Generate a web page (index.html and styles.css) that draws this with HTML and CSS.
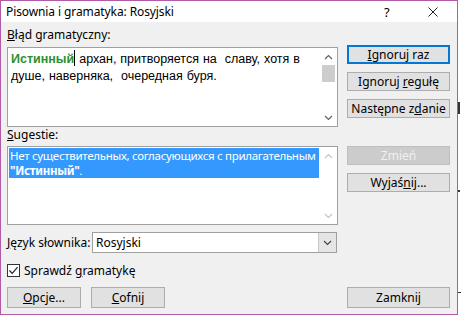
FILE: index.html
```html
<!DOCTYPE html>
<html lang="pl">
<head>
  <meta charset="UTF-8">
  <title>Pisownia i gramatyka: Rosyjski</title>
  <link rel="stylesheet" href="styles.css">
</head>
<body>
<div class="page">
  <div class="dialog">
    <div class="titlebar">
      <span class="title">Pisownia i gramatyka: Rosyjski</span>
      <span class="help">?</span>
      <svg class="close" width="10" height="10" viewBox="0 0 10 10"><path d="M0.5 0.5L9.5 9.5M9.5 0.5L0.5 9.5" stroke="#222" stroke-width="1"/></svg>
    </div>

    <div class="body">
      <div class="top">
        <div class="left">
          <div class="label"><u>B</u>łąd gramatyczny:</div>
          <div class="box error-box">
            <div class="error-text"><span class="wrong">Истинный</span><span class="caret"></span> архан, притворяется на&nbsp; славу, хотя в душе, наверняка,&nbsp; очередная буря.</div>
            <div class="scroll">
              <svg width="9" height="6" viewBox="0 0 9 6"><path d="M1 5L4.5 1.5L8 5" fill="none" stroke="#606060" stroke-width="1.2"/></svg>
              <div class="thumb"></div>
              <div class="spacer"></div>
              <svg width="9" height="6" viewBox="0 0 9 6"><path d="M1 1L4.5 4.5L8 1" fill="none" stroke="#606060" stroke-width="1.2"/></svg>
            </div>
          </div>
          <div class="label sug-label"><u>S</u>ugestie:</div>
          <div class="box sug-box">
            <div class="sug-list">
              <div class="sug-item">Нет существительных, согласующихся с прилагательным<br><b>"Истинный"</b>.</div>
            </div>
            <div class="scroll off">
              <svg width="9" height="6" viewBox="0 0 9 6"><path d="M1 5L4.5 1.5L8 5" fill="none" stroke="#c4c4c4" stroke-width="1.2"/></svg>
              <div class="spacer"></div>
              <svg width="9" height="6" viewBox="0 0 9 6"><path d="M1 1L4.5 4.5L8 1" fill="none" stroke="#c4c4c4" stroke-width="1.2"/></svg>
            </div>
          </div>
        </div>

        <div class="right">
          <button class="btn default"><u>I</u>gnoruj raz</button>
          <button class="btn">Ignoruj <u>r</u>egułę</button>
          <button class="btn">Następne z<u>d</u>anie</button>
          <button class="btn disabled gap">Zmień</button>
          <button class="btn">Wyjaś<u>n</u>ij...</button>
        </div>
      </div>

      <div class="lang-row">
        <span class="lang-label"><u>J</u>ęzyk słownika:</span>
        <div class="combo">
          <span class="combo-value">Rosyjski</span>
          <span class="combo-btn">
            <svg width="9" height="6" viewBox="0 0 9 6"><path d="M1 1L4.5 4.5L8 1" fill="none" stroke="#404040" stroke-width="1.1"/></svg>
          </span>
        </div>
      </div>

      <label class="check-row">
        <span class="checkbox">
          <svg width="11" height="11" viewBox="0 0 11 11"><path d="M1.5 5.5L4.2 8.3L9.6 2.2" fill="none" stroke="#222" stroke-width="1.2"/></svg>
        </span>
        <span>Sprawdź <u>g</u>ramatykę</span>
      </label>

      <div class="bottom-row">
        <button class="btn small"><u>O</u>pcje...</button>
        <button class="btn small"><u>C</u>ofnij</button>
        <span class="grow"></span>
        <button class="btn">Zamknij</button>
      </div>
    </div>
  </div>
  <div class="behind">
    <span class="mark m1"></span>
    <span class="mark m2"></span>
    <span class="mark m3"></span>
  </div>
</div>
</body>
</html>
```

FILE: styles.css
```css
body {
  margin: 0;
  padding: 0;
  background: #ffffff;
  font-family: "Noto Sans", "Open Sans", sans-serif;
  font-size: 12px;
  color: #000;
}

.page {
  display: flex;
  width: 461px;
  height: 317px;
  overflow: hidden;
}

.dialog {
  width: 458px;
  height: 315px;
  box-sizing: border-box;
  border: 1px solid #b05aa8;
  background: #f0f0f0;
  display: flex;
  flex-direction: column;
}

.titlebar {
  height: 21px;
  background: #ffffff;
  display: flex;
  align-items: center;
  padding-left: 5px;
  flex-shrink: 0;
}

.title {
  flex: 1;
  font-size: 12px;
  letter-spacing: -0.1px;
}

.help {
  width: 8px;
  margin-right: 36px;
  font-size: 13px;
}

.close {
  margin-right: 19px;
}

.body {
  padding: 5px 0 0 6px;
  display: flex;
  flex-direction: column;
}

.top {
  display: flex;
}

.left {
  width: 331px;
  display: flex;
  flex-direction: column;
}

.label {
  height: 16px;
  line-height: 16px;
  margin-bottom: 4px;
}

.sug-label {
  margin-bottom: 3px;
}

.box {
  background: #ffffff;
  border: 1px solid #a0a0a0;
  display: flex;
  box-sizing: border-box;
}

.error-box {
  height: 80px;
}

.sug-box {
  height: 79px;
}

.error-text {
  flex: 1;
  padding: 2px 3px;
  font-family: "Liberation Sans", Arial, sans-serif;
  font-size: 12.5px;
  line-height: 17px;
  word-spacing: 0.5px;
}

.wrong {
  font-weight: bold;
  color: #2f8f2f;
}

.caret {
  display: inline-block;
  width: 1px;
  height: 16px;
  background: #000;
  vertical-align: -3px;
}

.scroll {
  width: 17px;
  display: flex;
  flex-direction: column;
  align-items: center;
  padding: 6px 0 5px;
  box-sizing: border-box;
}

.thumb {
  width: 13px;
  height: 17px;
  background: #cdcdcd;
  margin-top: 5px;
}

.spacer {
  flex: 1;
}

.sug-list {
  flex: 1;
  min-width: 0;
  padding: 1px 1px 0 1px;
}

.sug-item {
  background: #3399ff;
  color: #ffffff;
  padding: 0 1px;
  line-height: 15px;
  font-size: 11.5px;
  letter-spacing: -0.3px;
  white-space: nowrap;
  overflow: hidden;
}

.right {
  display: flex;
  flex-direction: column;
  margin-left: 9px;
  padding-top: 18px;
  gap: 8px;
}

.btn {
  width: 103px;
  height: 19px;
  padding: 0;
  box-sizing: border-box;
  background: #e1e1e1;
  border: 1px solid #adadad;
  font-family: "Noto Sans", "Open Sans", sans-serif;
  font-size: 12px;
  line-height: 16px;
  color: #000;
}

.btn.default {
  border: 2px solid #0078d7;
}

.btn.disabled {
  background: #cccccc;
  border-color: #bfbfbf;
  color: #f0f0f0;
}

.btn.gap {
  margin-top: 20px;
}

.lang-row {
  display: flex;
  align-items: center;
  margin-top: 7px;
  height: 21px;
}

.lang-label {
  width: 85px;
}

.combo {
  width: 245px;
  height: 21px;
  box-sizing: border-box;
  border: 1px solid #a0a0a0;
  background: #ffffff;
  display: flex;
  align-items: center;
}

.combo-value {
  flex: 1;
  padding-left: 3px;
}

.combo-btn {
  width: 17px;
  height: 19px;
  background: #e5e5e5;
  border-left: 1px solid #c8c8c8;
  display: flex;
  align-items: center;
  justify-content: center;
}

.check-row {
  display: flex;
  align-items: center;
  margin-top: 10px;
  height: 15px;
}

.checkbox {
  width: 13px;
  height: 13px;
  box-sizing: border-box;
  border: 1px solid #333;
  background: #ffffff;
  display: flex;
  align-items: center;
  justify-content: center;
  margin-right: 4px;
}

.bottom-row {
  display: flex;
  margin-top: 9px;
  width: 443px;
  gap: 10px;
}

.btn.small {
  width: 74px;
}

.bottom-row .btn {
  height: 21px;
}

.grow {
  flex: 1;
}

.behind {
  flex: 1;
  position: relative;
}

.mark {
  position: absolute;
  background: #333;
}

.m1 {
  top: 102px;
  left: 0;
  width: 2px;
  height: 12px;
}

.m2 {
  top: 190px;
  left: 0;
  width: 2px;
  height: 2px;
}

.m3 {
  top: 292px;
  left: 0;
  width: 3px;
  height: 1px;
}
```
